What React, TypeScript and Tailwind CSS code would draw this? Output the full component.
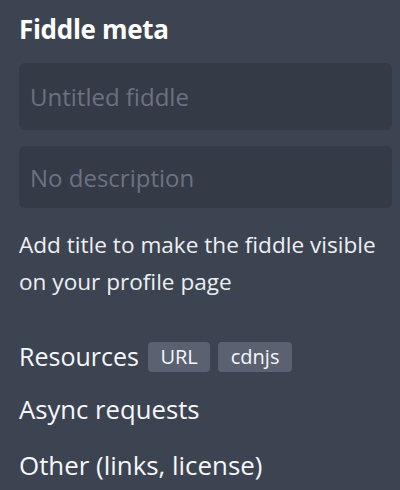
export default function App() {
  return (
    <div
      className="w-[400px] h-[490px] bg-[#3d4451] text-[#f5f7fa] overflow-hidden pl-[19px] pr-[8px] pt-[11px]"
      style={{ fontFamily: '"Open Sans", "Noto Sans", sans-serif' }}
    >
      <h2 className="text-[26px] font-bold leading-[36px] tracking-[-0.3px] text-white">Fiddle meta</h2>

      <div className="mt-[16px] flex flex-col gap-[16px]">
        <input
          className="h-[67px] w-full rounded-[6px] bg-[#343a46] px-[11px] text-[24px] outline-none placeholder:text-[#6b7382]"
          placeholder="Untitled fiddle"
        />
        <input
          className="h-[62px] w-full rounded-[6px] bg-[#343a46] px-[11px] text-[24px] outline-none placeholder:text-[#6b7382]"
          placeholder="No description"
        />
      </div>

      <p className="mt-[18px] pr-[4px] text-[22.6px] leading-[37px] text-[#eceff3]">
        Add title to make the fiddle visible on your profile page
      </p>

      <div className="mt-[32px] flex items-center h-[50px] text-[25px]">
        <span className="mr-[9px]">Resources</span>
        <span className="mr-[8px] rounded-[4px] bg-[#5a6171] px-[12.5px] h-[30px] flex items-center text-[20px]">URL</span>
        <span className="rounded-[4px] bg-[#5a6171] px-[12.5px] h-[30px] flex items-center text-[20px]">cdnjs</span>
      </div>
      <div className="text-[25.7px] leading-[55px]">Async requests</div>
      <div className="text-[25.9px] leading-[57px]">Other (links, license)</div>
    </div>
  );
}
